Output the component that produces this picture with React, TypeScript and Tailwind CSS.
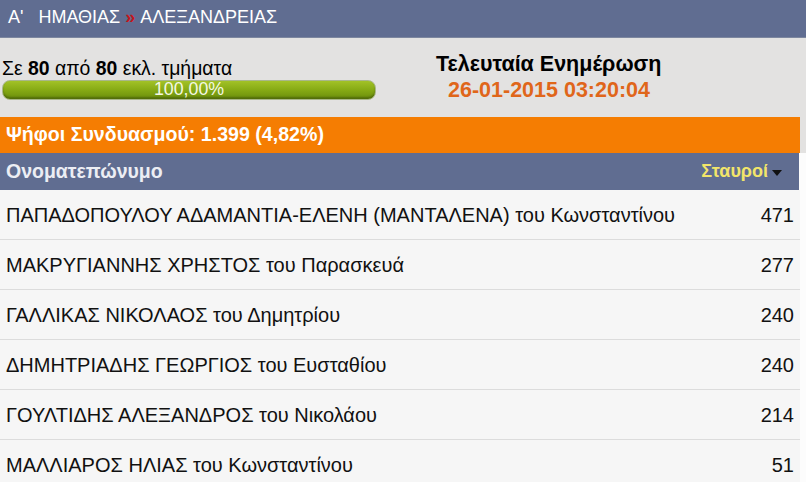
const rows = [
  { name: "ΠΑΠΑΔΟΠΟΥΛΟΥ ΑΔΑΜΑΝΤΙΑ-ΕΛΕΝΗ (ΜΑΝΤΑΛΕΝΑ) του Κωνσταντίνου", votes: 471 },
  { name: "ΜΑΚΡΥΓΙΑΝΝΗΣ ΧΡΗΣΤΟΣ του Παρασκευά", votes: 277 },
  { name: "ΓΑΛΛΙΚΑΣ ΝΙΚΟΛΑΟΣ του Δημητρίου", votes: 240 },
  { name: "ΔΗΜΗΤΡΙΑΔΗΣ ΓΕΩΡΓΙΟΣ του Ευσταθίου", votes: 240 },
  { name: "ΓΟΥΛΤΙΔΗΣ ΑΛΕΞΑΝΔΡΟΣ του Νικολάου", votes: 214 },
  { name: "ΜΑΛΛΙΑΡΟΣ ΗΛΙΑΣ του Κωνσταντίνου", votes: 51 },
];

export default function App() {
  return (
    <div className="w-[806px] h-[482px] overflow-hidden bg-[#e3e2e1] font-['Liberation_Sans',Arial,sans-serif]">
      <div className="h-[38px] bg-[#606d91] flex items-center pl-[8px] pb-[2px] text-white text-[18px] border-b border-[#7d879f]">
        <span>Α'</span>
        <span className="ml-[15px]">ΗΜΑΘΙΑΣ</span>
        <span className="mx-[5px] text-[#c4161c] font-bold">»</span>
        <span>ΑΛΕΞΑΝΔΡΕΙΑΣ</span>
      </div>

      <div className="h-[79px] flex">
        <div className="w-[400px] pl-[2px] pt-[19px]">
          <div className="text-[19.4px] leading-[22px] text-black">
            Σε <b>80</b> από <b>80</b> εκλ. τμήματα
          </div>
          <div className="mt-[1px] w-[374px] h-[20px] rounded-[8px] border border-[#a9b78a] bg-gradient-to-b from-[#a2c226] via-[#86aa14] to-[#6b8e0c] flex items-center justify-center text-[#f4f8e4] text-[17.8px] leading-none shadow-[inset_0_-2px_2px_rgba(0,0,0,0.25)]">
            100,00%
          </div>
        </div>
        <div className="flex-1 pt-[14px] pl-[36px] leading-[24px]">
          <div className="text-[21.5px] font-bold text-black">Τελευταία Ενημέρωση</div>
          <div className="mt-[2px] pl-[12px] text-[21.5px] font-bold text-[#e0661a]">26-01-2015 03:20:04</div>
        </div>
      </div>

      <div className="w-[800px] h-[36px] bg-[#f57d02] flex items-center pl-[6px] text-white text-[19.6px] font-bold">
        Ψήφοι Συνδυασμού: 1.399 (4,82%)
      </div>

      <div className="bg-[#fcfcfc]">
        <div className="w-[799px] h-[37px] bg-[#606d91] flex items-center justify-between pl-[6px] pr-[17px] font-bold">
          <span className="text-[#eceef4] text-[19.5px]">Ονοματεπώνυμο</span>
          <span className="flex items-center text-[#f2e56a] text-[18px]">
            Σταυροί
            <svg width="10" height="6" viewBox="0 0 10 6" className="ml-[4px] mt-[2px]">
              <path d="M0 0 L10 0 L5 6 Z" fill="#111" />
            </svg>
          </span>
        </div>

        <div className="w-[800px] bg-[#f6f6f6]">
          {rows.map((r) => (
            <div
              key={r.name}
              className="h-[50px] flex items-center justify-between pl-[6px] pr-[6px] border-b border-[#dcdcdc] text-[20px] text-[#111]"
            >
              <span>{r.name}</span>
              <span>{r.votes}</span>
            </div>
          ))}
        </div>
      </div>
    </div>
  );
}
